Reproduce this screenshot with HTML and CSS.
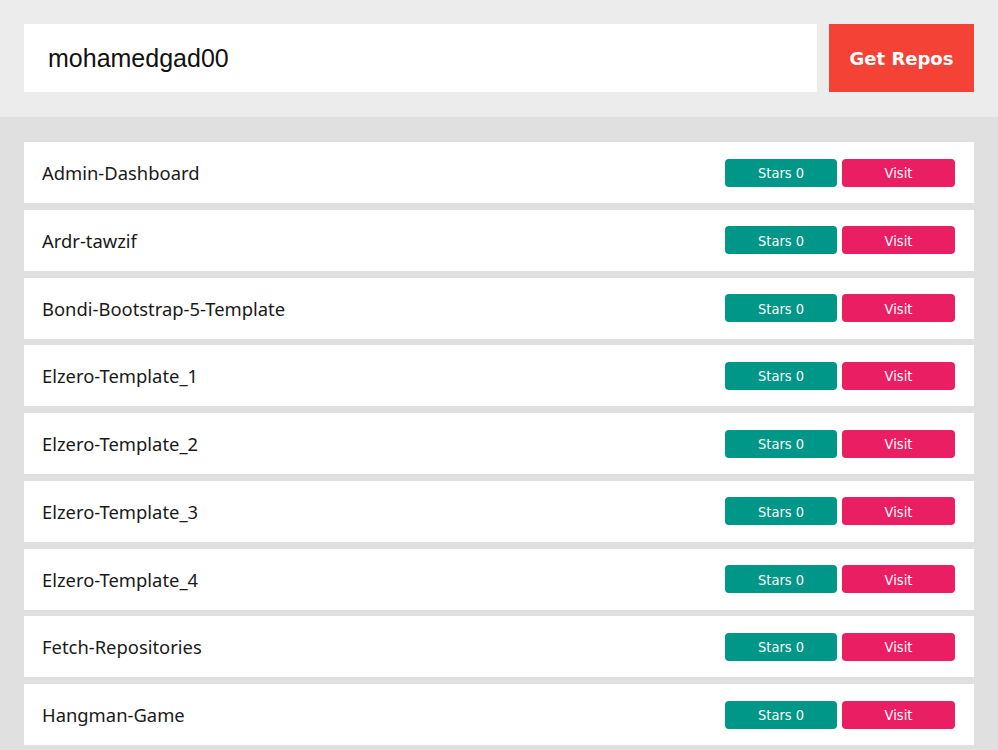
FILE: index.html
```html
<!DOCTYPE html>
<html>
<head>
<meta charset="utf-8">
<link rel="stylesheet" href="styles.css">
</head>
<body>
<div class="search">
  <div class="input">mohamedgad00</div>
  <div class="get">Get Repos</div>
</div>
<div class="repos">
  <div class="repo"><span class="name">Admin-Dashboard</span><div class="acts"><span class="stars">Stars 0</span><span class="visit">Visit</span></div></div>
  <div class="repo"><span class="name">Ardr-tawzif</span><div class="acts"><span class="stars">Stars 0</span><span class="visit">Visit</span></div></div>
  <div class="repo"><span class="name">Bondi-Bootstrap-5-Template</span><div class="acts"><span class="stars">Stars 0</span><span class="visit">Visit</span></div></div>
  <div class="repo"><span class="name">Elzero-Template_1</span><div class="acts"><span class="stars">Stars 0</span><span class="visit">Visit</span></div></div>
  <div class="repo"><span class="name">Elzero-Template_2</span><div class="acts"><span class="stars">Stars 0</span><span class="visit">Visit</span></div></div>
  <div class="repo"><span class="name">Elzero-Template_3</span><div class="acts"><span class="stars">Stars 0</span><span class="visit">Visit</span></div></div>
  <div class="repo"><span class="name">Elzero-Template_4</span><div class="acts"><span class="stars">Stars 0</span><span class="visit">Visit</span></div></div>
  <div class="repo"><span class="name">Fetch-Repositories</span><div class="acts"><span class="stars">Stars 0</span><span class="visit">Visit</span></div></div>
  <div class="repo"><span class="name">Hangman-Game</span><div class="acts"><span class="stars">Stars 0</span><span class="visit">Visit</span></div></div>
</div>
</body>
</html>
```
FILE: styles.css
```css
* { box-sizing: border-box; }
html, body { margin: 0; padding: 0; }
body { background: #e0e0e0; overflow: hidden; height: 750px; }
.search {
  background: #ececec;
  padding: 24px 24px 25px;
  display: flex;
  gap: 12px;
  height: 117px;
}
.input {
  flex: 1;
  background: #fff;
  height: 68px;
  padding: 0 24px;
  display: flex;
  align-items: center;
  font-family: "Liberation Sans", Arial, sans-serif;
  font-size: 25px;
  color: #111;
}
.get {
  width: 145px;
  height: 68px;
  background: #f44336;
  color: #fff;
  font-family: "DejaVu Sans", Tahoma, sans-serif;
  font-weight: bold;
  font-size: 18px;
  display: flex;
  align-items: center;
  justify-content: center;
}
.repos {
  padding: 25px 24px 0;
  display: flex;
  flex-direction: column;
  gap: 6.75px;
}
.repo {
  background: #fff;
  height: 61px;
  display: flex;
  align-items: center;
  justify-content: space-between;
  padding: 0 19px 0 18px;
}
.name {
  font-family: "Noto Sans", "Open Sans", sans-serif;
  font-size: 18.4px;
  color: #1a1a1a;
}
.acts { display: flex; gap: 5px; }
.stars, .visit {
  height: 28px;
  border-radius: 4px;
  color: #fff;
  font-family: "DejaVu Sans Condensed", "DejaVu Sans", Tahoma, sans-serif;
  font-size: 14.5px;
  display: flex;
  align-items: center;
  justify-content: center;
  padding-top: 1px;
}
.stars { width: 112px; background: #009688; }
.visit { width: 113px; background: #e91e63; }
```
